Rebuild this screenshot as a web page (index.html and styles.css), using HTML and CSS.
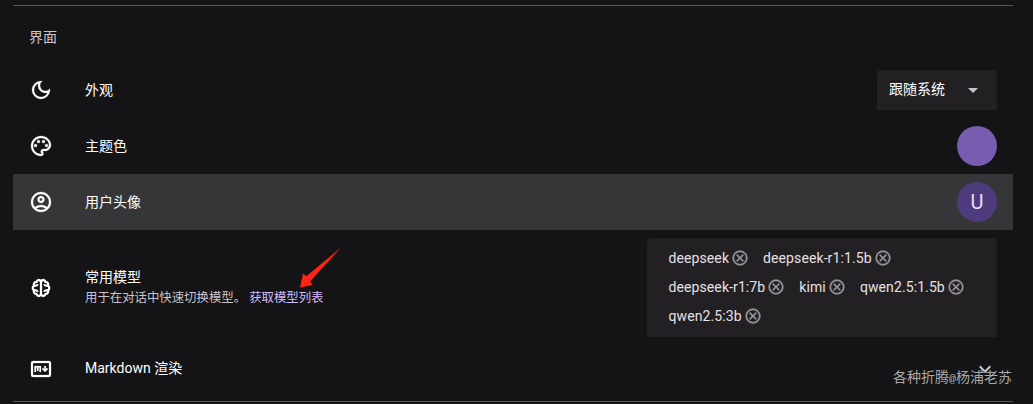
FILE: index.html
```html
<!DOCTYPE html>
<html lang="zh-CN">
<head>
<meta charset="utf-8">
<title>设置</title>
<link rel="stylesheet" href="styles.css">
</head>
<body>
<svg class="defs" width="0" height="0"><defs>
<symbol id="close" viewBox="0 0 24 24"><path d="M12 2a10 10 0 1 0 0 20 10 10 0 0 0 0-20zm0 18a8 8 0 1 1 0-16 8 8 0 0 1 0 16zm3.59-13L12 10.59 8.41 7 7 8.41 10.59 12 7 15.59 8.41 17 12 13.41 15.59 17 17 15.59 13.41 12 17 8.41z"/></symbol>
</defs></svg>
<main class="settings">
<h2 class="section-title">界面</h2>
<div class="row">
<svg class="icon" viewBox="0 0 24 24"><path d="M9.37 5.51C9.19 6.15 9.1 6.82 9.1 7.5c0 4.08 3.32 7.4 7.4 7.4.68 0 1.35-.09 1.99-.27C17.45 17.19 14.93 19 12 19c-3.86 0-7-3.14-7-7 0-2.93 1.81-5.45 4.37-6.49zM12 3a9 9 0 1 0 9 9c0-.46-.04-.92-.1-1.36a5.389 5.389 0 0 1-4.4 2.26 5.403 5.403 0 0 1-3.14-9.8c-.44-.06-.9-.1-1.36-.1z"/></svg>
<div class="label">外观</div>
<div class="select"><span>跟随系统</span><svg class="icon caret" viewBox="0 0 24 24"><path d="M7 10l5 5 5-5z"/></svg></div>
</div>
<div class="row">
<svg class="icon" viewBox="0 0 24 24"><path d="M12 22C6.49 22 2 17.51 2 12S6.49 2 12 2s10 4.04 10 9c0 3.31-2.69 6-6 6h-1.77c-.28 0-.5.22-.5.5 0 .12.05.23.13.33.41.47.64 1.06.64 1.67A2.5 2.5 0 0 1 12 22zm0-18c-4.41 0-8 3.59-8 8s3.59 8 8 8c.28 0 .5-.22.5-.5a.54.54 0 0 0-.14-.35c-.41-.46-.63-1.05-.63-1.65a2.5 2.5 0 0 1 2.5-2.5H16c2.21 0 4-1.79 4-4 0-3.86-3.59-7-8-7z"/><circle cx="6.5" cy="11.5" r="1.5"/><circle cx="9.5" cy="7.5" r="1.5"/><circle cx="14.5" cy="7.5" r="1.5"/><circle cx="17.5" cy="11.5" r="1.5"/></svg>
<div class="label">主题色</div>
<div class="avatar swatch"></div>
</div>
<div class="row active">
<svg class="icon" viewBox="0 -960 960 960"><path d="M234-276q51-39 114-61.500T480-360q69 0 132 22.500T726-276q35-41 54.500-93T800-480q0-133-93.500-226.500T480-800q-133 0-226.500 93.500T160-480q0 59 19.500 111t54.500 93Zm246-164q-59 0-99.500-40.500T340-580q0-59 40.500-99.500T480-720q59 0 99.500 40.500T620-580q0 59-40.500 99.500T480-440Zm0 360q-83 0-156-31.500T197-197q-54-54-85.500-127T80-480q0-83 31.500-156T197-763q54-54 127-85.500T480-880q83 0 156 31.500T763-763q54 54 85.500 127T880-480q0 83-31.500 156T763-197q-54 54-127 85.500T480-80Zm0-80q53 0 100-15.500t86-44.500q-39-29-86-44.500T480-280q-53 0-100 15.500T294-220q39 29 86 44.500T480-160Zm0-360q26 0 43-17t17-43q0-26-17-43t-43-17q-26 0-43 17t-17 43q0 26 17 43t43 17Z"/></svg>
<div class="label">用户头像</div>
<div class="avatar user">U</div>
</div>
<div class="row models">
<svg class="icon brain" viewBox="0 0 24 24"><path d="M12 5v14M11.700 5.200C10.800 3.400 7.900 3.700 7.600 5.800 5.400 5.900 4.300 7.900 5.100 9.500 3.300 10.800 3.300 13.300 5.100 14.500 4.300 16.300 5.600 18 7.600 18.200 8 20.300 10.800 20.600 11.700 18.800M12.300 5.200C13.200 3.400 16.100 3.700 16.400 5.800 18.600 5.900 19.700 7.900 18.900 9.500 20.700 10.800 20.700 13.300 18.900 14.500 19.700 16.300 18.400 18 16.400 18.200 16 20.300 13.200 20.600 12.300 18.800"/><path d="M5 9.800h1.500q2 0 2-1.800M5 14.200h1.500q2 0 2 1.800M19 9.800h-1.500q-2 0-2-1.800M19 14.200h-1.500q-2 0-2 1.800"/></svg>
<div class="label"><div class="name">常用模型</div><div class="caption">用于在对话中快速切换模型。 <a class="link">获取模型列表</a></div></div>
<div class="chips">
<span class="chip">deepseek<svg><use href="#close"/></svg></span>
<span class="chip">deepseek-r1:1.5b<svg><use href="#close"/></svg></span>
<span class="chip">deepseek-r1:7b<svg><use href="#close"/></svg></span>
<span class="chip">kimi<svg><use href="#close"/></svg></span>
<span class="chip">qwen2.5:1.5b<svg><use href="#close"/></svg></span>
<span class="chip">qwen2.5:3b<svg><use href="#close"/></svg></span>
</div>
<svg class="arrow" viewBox="0 0 42 42"><path d="M41 .5L10 34.500 12.800 38 0 40.500 3 26.500 6.300 29.300z"/></svg>
</div>
<div class="row markdown">
<svg class="icon" viewBox="0 0 24 24"><path fill-rule="evenodd" d="M4 4h16q2 0 2 2v12q0 2-2 2H4q-2 0-2-2V6q0-2 2-2zm0 2v12h16V6z"/><path d="M5.500 15V9h6.500v6h-1.500v-4.500h-1V14H8v-3.500H7V15zM15.200 9h1.600v3l1.200-1.100 1 1.100-3 3-3-3 1-1.100 1.200 1.100z"/></svg>
<div class="label">Markdown 渲染</div>
<svg class="icon expand" viewBox="0 0 24 24"><path d="M7.410 8.590L12 13.170l4.590-4.580L18 10l-6 6-6-6z"/></svg>
</div>
</main>
<div class="watermark">各种折腾<span class="at">@</span>杨浦老苏</div>
</body>
</html>
```
FILE: styles.css
```css
* { box-sizing: border-box; }
body {
  margin: 0;
  height: 404px;
  overflow: hidden;
  background: #141416;
  color: #fff;
  font: 14px/20px Roboto, "Noto Sans CJK SC", sans-serif;
}
.defs { position: absolute; }
.settings {
  width: 1000px;
  height: 397px;
  margin: 5px 0 0 13px;
  border-top: 1px solid #57575a;
  border-bottom: 1px solid #57575a;
}
.section-title {
  margin: 0;
  height: 56px;
  padding: 21px 16px 0;
  color: #cac4d0;
  font-size: 14px;
  font-weight: 400;
  line-height: 20px;
}
.row {
  position: relative;
  display: flex;
  align-items: center;
  height: 56px;
  padding: 0 16px;
}
.active { background: #363638; }
.icon { flex: none; width: 24px; height: 24px; fill: #fff; stroke: #fff; stroke-width: .25; }
.active .icon { stroke-width: 10; }
.label { flex: 1; padding-left: 32px; }
.select {
  display: flex;
  align-items: center;
  justify-content: space-between;
  width: 120px;
  height: 40px;
  padding: 0 12px;
  border-radius: 4px 4px 0 0;
  background: #232024;
}
.select span { padding-bottom: 2px; }
.caret { fill: #cac4d0; stroke: none; }
.avatar {
  width: 40px;
  height: 40px;
  border-radius: 50%;
  font-size: 20px;
  line-height: 40px;
  text-align: center;
}
.swatch { background: #775cb0; }
.user { background: #4e3b7c; color: #eaddff; }
.models { height: 115px; }
.brain path { fill: none; stroke: #fff; stroke-width: 2.3; }
.brain path + path { stroke-width: 1.9; }
.models .label { padding-bottom: 1px; }
.name { line-height: 21px; }
.caption { color: #cac4d0; font-size: 12.400px; line-height: 20px; }
.link { color: #d3bcfd; }
.chips {
  display: flex;
  flex-wrap: wrap;
  align-content: flex-start;
  width: 350px;
  height: 99px;
  padding: 5px 14px;
  border-radius: 4px 4px 0 0;
  background: #232024;
  color: #e6e1e5;
}
.chip {
  display: flex;
  align-items: center;
  height: 29px;
  padding: 0 6.500px 0 7.500px;
  letter-spacing: .1px;
}
.chip svg {
  width: 18px;
  height: 18px;
  margin-left: 2px;
  fill: #969398;
  stroke: #969398;
  stroke-width: .4;
}
.arrow {
  position: absolute;
  left: 287px;
  top: 17px;
  width: 42px;
  height: 42px;
  fill: #ff2413;
}
.markdown { height: 48px; }
.markdown .label { padding-bottom: 2px; }
.expand { fill: #cac4d0; stroke: none; margin-bottom: 1px; }
.watermark {
  position: absolute;
  left: 893px;
  top: 366px;
  color: #a9a9aa;
  font: 14px/20px "Noto Sans CJK SC", sans-serif;
  white-space: nowrap;
}
.at { font: 11.700px/20px "Liberation Mono", monospace; }
```
